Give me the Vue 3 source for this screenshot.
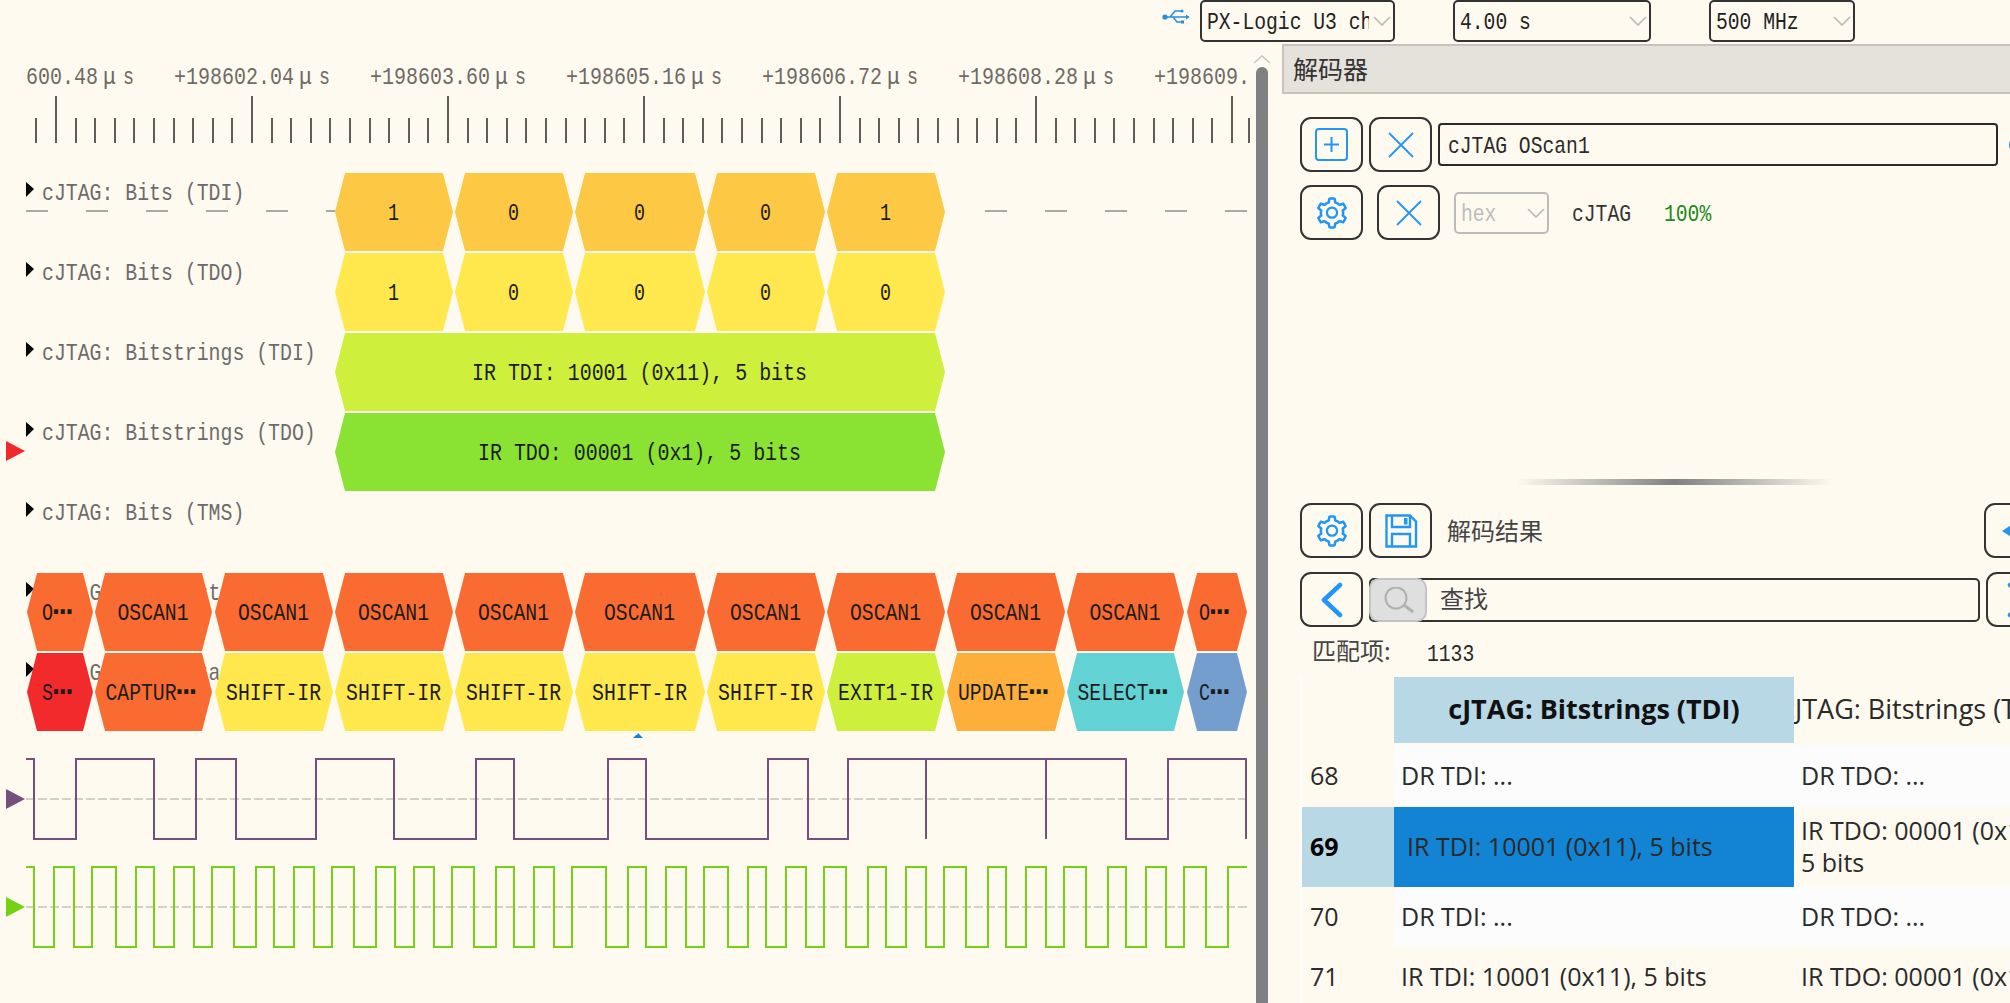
<template>
  <div class="app">
    <div class="topbar">
      <svg class="usb" width="28" height="16" viewBox="0 0 28 16" fill="none" stroke="#2490d8" stroke-width="1.5">
        <circle cx="3" cy="8" r="2.6" fill="#2490d8" stroke="none" />
        <path d="M3 8H27M8 8L13 2H19M11 8L15 13H20" />
        <circle cx="20" cy="2" r="1.5" fill="#2490d8" stroke="none" />
        <rect x="19" y="11.5" width="3" height="3" fill="#2490d8" stroke="none" />
        <path d="M24 5.5L27.5 8L24 10.5Z" fill="#2490d8" stroke="none" />
      </svg>
      <div class="select sel-device">
        <div class="sel-clip"><span class="mono">PX-Logic U3 channel</span></div>
        <svg class="chev" width="18" height="10" viewBox="0 0 18 10"><path d="M1 1L9 9L17 1" /></svg>
      </div>
      <div class="select sel-time">
        <div class="sel-clip"><span class="mono">4.00 s</span></div>
        <svg class="chev" width="18" height="10" viewBox="0 0 18 10"><path d="M1 1L9 9L17 1" /></svg>
      </div>
      <div class="select sel-rate">
        <div class="sel-clip"><span class="mono">500 MHz</span></div>
        <svg class="chev" width="18" height="10" viewBox="0 0 18 10"><path d="M1 1L9 9L17 1" /></svg>
      </div>
    </div>

    <div class="main">
      <!-- trace canvas, drawn in page coordinates -->
      <svg class="canvas" width="1256" height="959" viewBox="0 44 1256 959">
        <defs>
          <clipPath id="view"><rect x="26" y="44" width="1221" height="959" /></clipPath>
        </defs>

        <g clip-path="url(#view)">
          <text v-for="t in rulerLabels" :key="t.x" class="ruler-text" :y="84">
            <tspan :x="t.x" textLength="120" lengthAdjust="spacingAndGlyphs">{{ t.num }}</tspan>
            <tspan :x="t.x + 125" textLength="13" lengthAdjust="spacingAndGlyphs">μ</tspan>
            <tspan :x="t.x + 145" textLength="11" lengthAdjust="spacingAndGlyphs">s</tspan>
          </text>
        </g>
        <line v-for="t in ticks" :key="t.x" class="tick" :x1="t.x" :x2="t.x" :y1="t.top" y2="143" />

        <!-- row names -->
        <g v-for="l in labels" :key="l.y">
          <path class="row-arrow" :d="`M26 ${l.y - 10}L34 ${l.y - 3}L26 ${l.y + 5}Z`" />
          <text
            class="label"
            x="42"
            :y="l.y + 8"
            :textLength="l.text.length * 11.9"
            lengthAdjust="spacingAndGlyphs"
          >{{ l.text }}</text>
        </g>

        <line class="idle" x1="26" x2="335" y1="211" y2="211" />
        <line class="idle idle-right" x1="985" x2="1247" y1="211" y2="211" />

        <!-- decoded annotations -->
        <g v-for="s in segments" :key="s.key">
          <polygon :points="s.points" :fill="s.fill" />
          <text class="seg-text" :x="s.tx" :y="s.ty">
            <tspan :textLength="s.text.length * 12 - 1" lengthAdjust="spacingAndGlyphs">{{ s.text }}</tspan>
            <tspan v-if="s.cut" class="seg-more" dy="-6">…</tspan>
          </text>
        </g>

        <path class="marker" d="M633 738L636 735H637L638 733L640 735L643 738Z" />

        <!-- cursors and traces -->
        <path d="M6 441L25 451L6 461Z" fill="#ef2929" />
        <path d="M6 789L25 799L6 809Z" fill="#75507b" />
        <path d="M6 897L25 907L6 917Z" fill="#73d216" />
        <line class="mid" x1="26" x2="1247" y1="799" y2="799" />
        <line class="mid" x1="26" x2="1247" y1="907" y2="907" />
        <path class="trace" :d="purplePath" stroke="#75507b" />
        <path class="trace" :d="greenPath" stroke="#73d216" />
      </svg>

      <div class="scroll">
        <svg width="18" height="9" viewBox="0 0 18 9"><path d="M1 8L9 1L17 8" fill="none" stroke="#c4c4c4" stroke-width="1.5" /></svg>
        <div class="thumb"></div>
      </div>

      <div class="panel">
        <div class="panel-head">解码器</div>

        <div class="decoders">
          <div class="row row-name">
            <button class="icon-btn">
              <svg width="33" height="33" viewBox="0 0 33 33" fill="none" stroke="#2196f3" stroke-width="2">
                <rect x="1" y="1" width="31" height="31" rx="3" />
                <path d="M16.5 9V24M9 16.5H24" />
              </svg>
            </button>
            <button class="icon-btn">
              <svg width="26" height="26" viewBox="0 0 26 26" fill="none" stroke="#2196f3" stroke-width="1.8"><path d="M1 1L25 25M25 1L1 25" /></svg>
            </button>
            <div class="name-input"><span class="mono">cJTAG OScan1</span></div>
            <div class="help-dot"></div>
          </div>

          <div class="row row-decoder">
            <button class="icon-btn">
              <svg width="36" height="36" viewBox="0 0 1024 1024" fill="#2196f3"><path :d="gearPath" /></svg>
            </button>
            <button class="icon-btn">
              <svg width="26" height="26" viewBox="0 0 26 26" fill="none" stroke="#2196f3" stroke-width="1.8"><path d="M1 1L25 25M25 1L1 25" /></svg>
            </button>
            <div class="format">
              <span class="mono">hex</span>
              <svg class="chev" width="18" height="10" viewBox="0 0 18 10"><path d="M1 1L9 9L17 1" /></svg>
            </div>
            <span class="mono dec-name">cJTAG</span>
            <span class="mono dec-progress">100%</span>
          </div>
        </div>

        <div class="splitter"></div>

        <div class="row row-tools">
          <button class="icon-btn">
            <svg width="36" height="36" viewBox="0 0 1024 1024" fill="#2196f3"><path :d="gearPath" /></svg>
          </button>
          <button class="icon-btn">
            <svg width="34" height="34" viewBox="0 0 34 34" fill="none" stroke="#2196f3" stroke-width="2.4">
              <path d="M2.5 1.5H26L32 7.5V32.5H2.5Z" />
              <path d="M8 1.5V13H26V1.5M8 32.5V20H26V32.5" />
              <rect x="20" y="4" width="3.5" height="6.5" fill="#2196f3" stroke="none" />
            </svg>
          </button>
          <span class="cjk tools-title">解码结果</span>
          <button class="icon-btn push">
            <svg width="30" height="22" viewBox="0 0 30 22"><path d="M1 11L16 1V21Z" fill="#2196f3" /></svg>
          </button>
        </div>

        <div class="row row-search">
          <button class="icon-btn">
            <svg width="24" height="36" viewBox="0 0 24 36" fill="none" stroke="#2196f3" stroke-width="4.5" stroke-linecap="round" stroke-linejoin="round"><path d="M20 3L4 18L20 33" /></svg>
          </button>
          <div class="search">
            <div class="search-icon">
              <svg width="34" height="26" viewBox="0 0 34 26" fill="none" stroke="#b0b0b0" stroke-width="2">
                <circle cx="13" cy="11" r="10.5" />
                <path d="M21 18L30 25" stroke-width="3" />
              </svg>
            </div>
            <span class="cjk search-text">查找</span>
          </div>
          <button class="icon-btn push">
            <svg width="24" height="36" viewBox="0 0 24 36" fill="none" stroke="#2196f3" stroke-width="4.5" stroke-linecap="round" stroke-linejoin="round"><path d="M4 3L20 18L4 33" /></svg>
          </button>
        </div>

        <div class="matches">
          <span class="cjk match-label">匹配项:</span>
          <span class="mono">1133</span>
        </div>

        <div class="table">
          <div class="cell head-index"></div>
          <div class="cell head-active">cJTAG: Bitstrings (TDI)</div>
          <div class="cell head-other"><span>cJTAG: Bitstrings (TDO)</span></div>

          <template v-for="r in rows" :key="r.n">
            <div class="cell index" :class="{ 'index-active': r.active }">{{ r.n }}</div>
            <div class="cell" :class="{ stripe: r.stripe, 'cell-active': r.active }">{{ r.tdi }}</div>
            <div class="cell" :class="{ stripe: r.stripe }">{{ r.tdo }}</div>
          </template>
        </div>
      </div>
    </div>
  </div>
</template>

<script setup>
const gearPath =
  'M924.8 625.7l-65.5-56c3.1-19 4.7-38.4 4.7-57.8s-1.6-38.8-4.7-57.8l65.5-56a32.03 32.03 0 0 0 9.3-35.2l-.9-2.6a443.74 443.74 0 0 0-79.7-137.9l-1.8-2.1a32.12 32.12 0 0 0-35.1-9.5l-81.3 28.9c-30-24.6-63.5-44-99.7-57.6l-15.7-85a32.05 32.05 0 0 0-25.8-25.7l-2.7-.5c-52.1-9.4-106.9-9.4-159 0l-2.7.5a32.05 32.05 0 0 0-25.8 25.7l-15.8 85.4a351.86 351.86 0 0 0-99 57.4l-81.9-29.1a32 32 0 0 0-35.1 9.5l-1.8 2.1a446.02 446.02 0 0 0-79.7 137.9l-.9 2.6c-4.5 12.5-.8 26.5 9.3 35.2l66.3 56.6c-3.1 18.8-4.6 38-4.6 57.1 0 19.2 1.5 38.4 4.6 57.1L99 625.5a32.03 32.03 0 0 0-9.3 35.2l.9 2.6c18.1 50.4 44.9 96.9 79.7 137.9l1.8 2.1a32.12 32.12 0 0 0 35.1 9.5l81.9-29.1c29.8 24.5 63.1 43.9 99 57.4l15.8 85.4a32.05 32.05 0 0 0 25.8 25.7l2.7.5a449.4 449.4 0 0 0 159 0l2.7-.5a32.05 32.05 0 0 0 25.8-25.7l15.7-85a350 350 0 0 0 99.7-57.6l81.3 28.9a32 32 0 0 0 35.1-9.5l1.8-2.1c34.8-41.1 61.6-87.5 79.7-137.9l.9-2.6c4.5-12.3.8-26.3-9.3-35zM788.3 465.9c2.5 15.1 3.8 30.6 3.8 46.1s-1.3 31-3.8 46.1l-6.6 40.1 74.7 63.9a370.03 370.03 0 0 1-42.6 73.6L721 702.8l-31.4 25.8c-23.9 19.6-50.5 35-79.3 45.8l-38.1 14.3-17.9 97a377.5 377.5 0 0 1-85 0l-17.9-97.2-37.8-14.5c-28.5-10.8-55-26.2-78.7-45.7l-31.4-25.9-93.4 33.2c-17-22.9-31.2-47.6-42.6-73.6l75.5-64.5-6.5-40c-2.4-14.9-3.7-30.3-3.7-45.5 0-15.3 1.2-30.6 3.7-45.5l6.5-40-75.5-64.5c11.3-26.1 25.6-50.7 42.6-73.6l93.4 33.2 31.4-25.9c23.7-19.5 50.2-34.9 78.7-45.7l37.9-14.3 17.9-97.2c28.1-3.2 56.8-3.2 85 0l17.9 97 38.1 14.3c28.7 10.8 55.4 26.2 79.3 45.8l31.4 25.8 92.8-32.9c17 22.9 31.2 47.6 42.6 73.6L781.8 426l6.5 39.9zM512 326c-97.2 0-176 78.8-176 176s78.8 176 176 176 176-78.8 176-176-78.8-176-176-176zm79.2 255.2A111.6 111.6 0 0 1 512 614c-29.9 0-58-11.7-79.2-32.8A111.6 111.6 0 0 1 400 502c0-29.9 11.7-58 32.8-79.2C454 401.6 482.1 390 512 390c29.9 0 58 11.6 79.2 32.8A111.6 111.6 0 0 1 624 502c0 29.9-11.7 58-32.8 79.2z'

// ruler
const rulerLabels = [
  { x: -22, num: '+198600.48' },
  { x: 174, num: '+198602.04' },
  { x: 370, num: '+198603.60' },
  { x: 566, num: '+198605.16' },
  { x: 762, num: '+198606.72' },
  { x: 958, num: '+198608.28' },
  { x: 1154, num: '+198609.84' }
]

const ticks = []
for (let k = -1; k <= 61; k++) {
  ticks.push({ x: Math.min(Math.round(56 + k * 19.6), 1249), top: k >= 0 && k % 10 === 0 ? 96 : 118 })
}

const labels = [
  { y: 192, text: 'cJTAG: Bits (TDI)' },
  { y: 272, text: 'cJTAG: Bits (TDO)' },
  { y: 352, text: 'cJTAG: Bitstrings (TDI)' },
  { y: 432, text: 'cJTAG: Bitstrings (TDO)' },
  { y: 512, text: 'cJTAG: Bits (TMS)' },
  { y: 592, text: 'cJTAG: OSCAN states' },
  { y: 672, text: 'cJTAG: JTAG states' }
]

// annotation rows
const ORANGE = '#f96b30'
const YELLOW = '#ffe84d'
const fiveBits = [[335, 453], [455, 573], [575, 705], [707, 825], [827, 945]]
const twelve = [
  [27, 93], [95, 212], [215, 333], [335, 453], [455, 573], [575, 705],
  [707, 825], [827, 945], [947, 1065], [1067, 1184], [1187, 1247]
]

// cut = the label is shortened, the ellipsis takes two character cells
const makeSegment = (key, x0, x1, top, text, fill, cut = false) => {
  const mid = top + 39
  const bottom = top + 78
  const cells = text.length + (cut ? 2 : 0)
  return {
    key,
    text,
    fill,
    cut,
    tx: (x0 + x1) / 2 - (cells * 12) / 2,
    ty: mid + 8,
    points: `${x0},${mid} ${x0 + 10},${top} ${x1 - 10},${top} ${x1},${mid} ${x1 - 10},${bottom} ${x0 + 10},${bottom}`
  }
}

const segments = []
;['1', '0', '0', '0', '1'].forEach((t, i) => {
  segments.push(makeSegment(`a${i}`, fiveBits[i][0], fiveBits[i][1], 173, t, '#fdc844'))
})
;['1', '0', '0', '0', '0'].forEach((t, i) => {
  segments.push(makeSegment(`b${i}`, fiveBits[i][0], fiveBits[i][1], 253, t, YELLOW))
})
segments.push(makeSegment('c', 335, 945, 333, 'IR TDI: 10001 (0x11), 5 bits', '#cef03c'))
segments.push(makeSegment('d', 335, 945, 413, 'IR TDO: 00001 (0x1), 5 bits', '#8ae332'))

twelve.forEach(([x0, x1], i) => {
  const edge = i === 0 || i === twelve.length - 1
  segments.push(makeSegment(`e${i}`, x0, x1, 573, edge ? 'O' : 'OSCAN1', ORANGE, edge))
})

const states = [
  ['S', '#f32a2c', true],
  ['CAPTUR', ORANGE, true],
  ['SHIFT-IR', YELLOW],
  ['SHIFT-IR', YELLOW],
  ['SHIFT-IR', YELLOW],
  ['SHIFT-IR', YELLOW],
  ['SHIFT-IR', YELLOW],
  ['EXIT1-IR', '#cef03c'],
  ['UPDATE', '#fdae3b', true],
  ['SELECT', '#63d2d4', true],
  ['C', '#739ece', true]
]
states.forEach(([t, fill, cut], i) => {
  segments.push(makeSegment(`f${i}`, twelve[i][0], twelve[i][1], 653, t, fill, cut))
})

// traces: every edge x toggles the level
const tracePath = (edges, high, low, end) => {
  let level = true
  let d = `M26 ${high}`
  for (const x of edges) {
    d += `H${x}V${level ? low : high}`
    level = !level
  }
  return `${d}H${end}`
}

const purplePath =
  tracePath(
    [34, 76, 154, 196, 236, 316, 394, 476, 514, 608, 646, 768, 808, 848],
    759,
    839,
    1126
  ) +
  'V839H1168V759H1246V839M926 759V839M1046 759V839'

const greenPath = tracePath(
  [
    34, 54, 74, 92, 116, 136, 154, 174, 194, 212, 234, 256, 274, 294, 314, 332, 354, 376, 395,
    414, 434, 452, 474, 496, 514, 534, 554, 572, 606, 628, 646, 666, 686, 704, 728, 748, 766,
    786, 806, 824, 846, 868, 886, 906, 926, 944, 966, 988, 1006, 1026, 1046, 1064, 1086, 1108,
    1126, 1146, 1166, 1184, 1206, 1228
  ],
  867,
  947,
  1247
)

const rows = [
  { n: 68, tdi: 'DR TDI: ...', tdo: 'DR TDO: ...', stripe: true },
  {
    n: 69,
    tdi: 'IR TDI: 10001 (0x11), 5 bits',
    tdo: 'IR TDO: 00001 (0x1),\n5 bits',
    active: true
  },
  { n: 70, tdi: 'DR TDI: ...', tdo: 'DR TDO: ...', stripe: true },
  { n: 71, tdi: 'IR TDI: 10001 (0x11), 5 bits', tdo: 'IR TDO: 00001 (0x1), 5 bits' }
]
</script>

<style scoped>
.app {
  width: 2010px;
  height: 1003px;
  overflow: hidden;
  display: flex;
  flex-direction: column;
  background: #fffaf0;
  color: #2a2a2a;
}

.mono {
  display: inline-block;
  font-family: "Liberation Mono", monospace;
  font-size: 24px;
  white-space: pre;
  transform: translateY(2px) scaleX(0.82);
  transform-origin: left center;
}

.cjk {
  font-family: "Noto Sans CJK SC", sans-serif;
  font-size: 24px;
  color: #444;
}

/* top bar */
.topbar {
  height: 44px;
  flex: none;
  display: flex;
  align-items: flex-start;
  padding-left: 1162px;
}

.usb {
  margin-top: 9px;
  margin-right: 10px;
}

.select {
  height: 42px;
  box-sizing: border-box;
  border: 2px solid #333;
  border-radius: 5px;
  display: flex;
  align-items: center;
  justify-content: space-between;
  padding: 0 2px 0 5px;
}

.sel-device {
  width: 195px;
}

.sel-time {
  width: 198px;
  margin-left: 58px;
}

.sel-rate {
  width: 146px;
  margin-left: 58px;
}

.sel-clip {
  width: 162px;
  overflow: hidden;
  line-height: 36px;
  color: #222;
}

.sel-time .sel-clip,
.sel-rate .sel-clip {
  width: 110px;
}

.chev {
  flex: none;
  fill: none;
  stroke: #b8b8b8;
  stroke-width: 1.6;
}

/* main */
.main {
  flex: 1;
  min-height: 0;
  display: flex;
}

.canvas {
  flex: none;
  display: block;
}

.ruler-text,
.label,
.seg-text {
  font-family: "Liberation Mono", monospace;
  font-size: 24px;
}

.ruler-text {
  fill: #6e6a66;
}

.tick {
  stroke: #605c58;
  stroke-width: 2;
}

.label {
  fill: #6b6b6b;
}

.row-arrow {
  fill: #000;
}

.seg-text {
  fill: #1c1c1c;
}

.seg-more {
  font-size: 32px;
  font-weight: 700;
}

.idle {
  stroke: #aaa8a2;
  stroke-width: 2;
  stroke-dasharray: 22 38;
}

.marker {
  fill: #1383d3;
}

.mid {
  stroke: #d3d0c8;
  stroke-width: 2;
  stroke-dasharray: 9 3;
}

.trace {
  fill: none;
  stroke-width: 2;
}

/* scrollbar */
.scroll {
  width: 26px;
  flex: none;
  position: relative;
  padding-top: 11px;
  display: flex;
  flex-direction: column;
}

.scroll svg {
  margin-left: -3px;
}

.thumb {
  width: 12px;
  flex: 1;
  margin-top: 3px;
  background: #808080;
  border-radius: 6px 6px 0 0;
}

/* right panel */
.panel {
  width: 728px;
  flex: none;
  overflow: hidden;
}

.panel-head {
  height: 50px;
  box-sizing: border-box;
  border: solid #c7c4be;
  border-width: 2px 0 2px 2px;
  background: #e5e2dc;
  padding-left: 9px;
  font-family: "Noto Sans CJK SC", sans-serif;
  font-size: 25px;
  line-height: 44px;
  color: #333;
}

.decoders {
  height: 385px;
  padding-top: 23px;
  box-sizing: border-box;
}

.row {
  width: 747px;
  margin-left: 18px;
  display: flex;
  align-items: center;
}

.icon-btn {
  width: 63px;
  height: 55px;
  flex: none;
  box-sizing: border-box;
  padding: 0;
  background: transparent;
  border: 2px solid #333;
  border-radius: 11px;
  display: flex;
  align-items: center;
  justify-content: center;
}

.row-name {
  gap: 6px;
}

.name-input {
  width: 560px;
  height: 43px;
  box-sizing: border-box;
  border: 2px solid #2a2a2a;
  border-radius: 4px;
  padding-left: 8px;
  line-height: 40px;
  flex: none;
}

.help-dot {
  width: 18px;
  height: 18px;
  margin-left: 5px;
  box-sizing: border-box;
  flex: none;
  border: 3px solid #2196f3;
  border-radius: 50%;
}

.row-decoder {
  margin-top: 13px;
  gap: 14px;
}

.format {
  width: 95px;
  height: 42px;
  box-sizing: border-box;
  border: 2px solid #bbb;
  border-radius: 5px;
  padding: 0 2px 0 5px;
  display: flex;
  align-items: center;
  justify-content: space-between;
  color: #bdbdbd;
  flex: none;
}

.format .mono {
  width: 50px;
}

.dec-name {
  margin-left: 9px;
  width: 78px;
  color: #333;
}

.dec-progress {
  color: #1a8a1a;
}

.splitter {
  width: 315px;
  height: 6px;
  margin-left: 235px;
  background: linear-gradient(to right, #fffaf0, #808080 50%, #fffaf0);
}

.row-tools {
  margin-top: 18px;
  gap: 6px;
}

.tools-title {
  margin-left: 9px;
  margin-top: -2px;
}

.push {
  margin-left: auto;
}

.row-search {
  margin-top: 14px;
  gap: 6px;
}

.search {
  width: 611px;
  height: 44px;
  box-sizing: border-box;
  border: 2px solid #333;
  border-radius: 5px;
  display: flex;
  align-items: center;
  gap: 13px;
  flex: none;
}

.search-text {
  margin-top: -4px;
}

.search-icon {
  width: 58px;
  height: 44px;
  margin: -2px 0 -2px -2px;
  box-sizing: border-box;
  border: 2px solid #c4c4c4;
  border-radius: 10px;
  background: #dfdfdf;
  display: flex;
  align-items: center;
  justify-content: center;
  padding-left: 4px;
  flex: none;
}

.matches {
  height: 50px;
  margin-left: 30px;
  display: flex;
  align-items: center;
}

.match-label {
  width: 115px;
  flex: none;
  margin-top: -5px;
}

.table {
  margin-left: 18px;
  border-left: 2px solid #fdfdfd;
  display: grid;
  grid-template-columns: 92px 400px 340px;
  grid-template-rows: 68px 62px 80px 60px 60px;
  font-family: "Open Sans", sans-serif;
  font-size: 25px;
  line-height: 32px;
  color: #2a2a2a;
}

.cell {
  padding-left: 7px;
  padding-bottom: 2px;
  box-sizing: border-box;
  display: flex;
  align-items: center;
  overflow: hidden;
  white-space: pre-line;
}

.index {
  padding-left: 8px;
}

.head-index,
.head-active,
.head-other {
  margin-bottom: 2px;
  font-size: 27px;
}

.index-active {
  background: #b8d8e6;
  font-weight: 700;
  color: #000;
}

.head-active {
  background: #b8d8e6;
  justify-content: center;
  padding-left: 0;
  font-weight: 700;
  color: #111;
}

.head-other {
  white-space: nowrap;
}

.head-other span {
  margin-left: -19px;
}

.stripe {
  background: #fcfcfc;
}

.cell-active {
  background: #1383d3;
  padding-left: 13px;
}
</style>

<style>
html,
body {
  margin: 0;
  overflow: hidden;
  background: #fffaf0;
}
</style>
